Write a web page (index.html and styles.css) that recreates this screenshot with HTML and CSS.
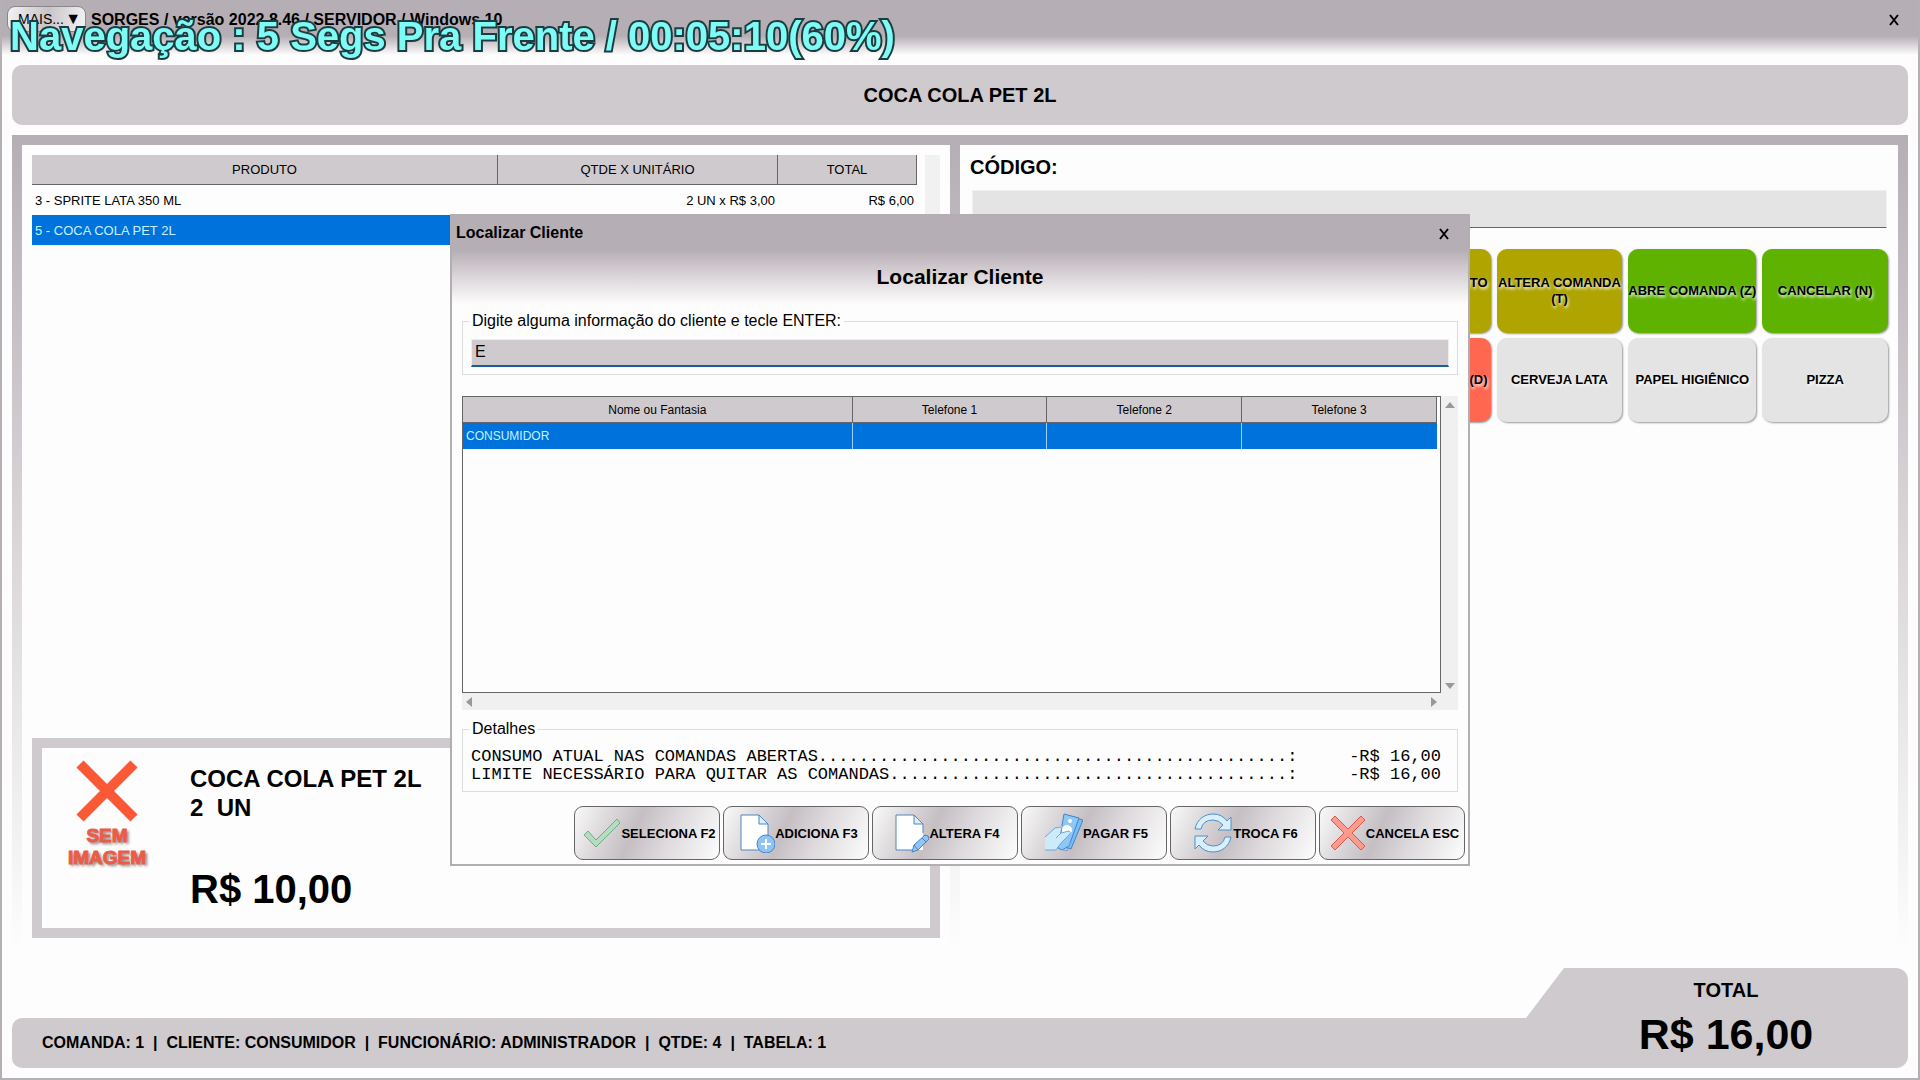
FILE: index.html
```html
<!DOCTYPE html>
<html lang="pt-BR">
<head>
    <meta charset="UTF-8">
    <meta name="viewport" content="width=device-width, initial-scale=1.0">
    <title>SORGES</title>
    <link rel="stylesheet" href="styles.css">
</head>
<body>
    <header class="titlebar">
        <button type="button" class="more">MAIS... <span class="arrow">▼</span></button>
        <span class="app-name">SORGES / versão 2022.8.46 / SERVIDOR / Windows 10</span>
        <button type="button" class="close" aria-label="Fechar"><svg width="12" height="12" viewBox="0 0 12 12"><path d="M2 1l8 10M10 1L2 11"/></svg></button>
    </header>

    <h1 class="banner">COCA COLA PET 2L</h1>

    <main class="content">
        <!-- Items of the current order -->
        <section class="panel order">
            <div class="order-list">
                <table class="items">
                    <thead>
                        <tr><th class="col-product">PRODUTO</th><th class="col-qty">QTDE X UNITÁRIO</th><th>TOTAL</th></tr>
                    </thead>
                    <tbody>
                        <tr><td>3 - SPRITE LATA 350 ML</td><td>2 UN x R$ 3,00</td><td>R$ 6,00</td></tr>
                        <tr class="selected"><td>5 - COCA COLA PET 2L</td><td>2 UN x R$ 5,00</td><td>R$ 10,00</td></tr>
                    </tbody>
                </table>
                <div class="track"></div>
            </div>
            <div class="product">
                <div class="no-image">
                    <svg width="62" height="62" viewBox="0 0 62 62"><path d="M4 4l54 54M58 4L4 58" stroke="#fb5836" stroke-width="10"/></svg>
                    <span>SEM<br>IMAGEM</span>
                </div>
                <div class="product-info">
                    <p class="product-name">COCA COLA PET 2L</p>
                    <p class="product-name">2&nbsp; UN</p>
                    <p class="price">R$ 10,00</p>
                </div>
            </div>
        </section>

        <!-- Code entry and shortcut keys -->
        <section class="panel entry">
            <label for="code">CÓDIGO:</label>
            <input type="text" id="code" class="code">
            <div class="keys">
                <button type="button" class="key olive key-first">ALTERA PRODUTO (P)</button>
                <button type="button" class="key olive">ALTERA COMANDA (T)</button>
                <button type="button" class="key green key-wide">ABRE COMANDA (Z)</button>
                <button type="button" class="key green">CANCELAR (N)</button>
                <button type="button" class="key red key-first">CANCELA ITEM (D)</button>
                <button type="button" class="key">CERVEJA LATA</button>
                <button type="button" class="key">PAPEL HIGIÊNICO</button>
                <button type="button" class="key">PIZZA</button>
            </div>
        </section>
    </main>

    <footer class="footer">
        <div class="status">COMANDA: 1&nbsp; |&nbsp; CLIENTE: CONSUMIDOR&nbsp; |&nbsp; FUNCIONÁRIO: ADMINISTRADOR&nbsp; |&nbsp; QTDE: 4&nbsp; |&nbsp; TABELA: 1</div>
        <svg class="slope" width="38" height="100" viewBox="0 0 38 100"><path d="M38 0L0 50v50h38z" fill="#cfcacd"/></svg>
        <div class="total">
            <span class="total-label">TOTAL</span>
            <strong class="total-value">R$ 16,00</strong>
        </div>
    </footer>

    <!-- Client search -->
    <div class="overlay">
        <div class="dialog" role="dialog" aria-labelledby="dialog-title">
            <div class="dialog-bar">
                <span>Localizar Cliente</span>
                <button type="button" class="close" aria-label="Fechar"><svg width="12" height="12" viewBox="0 0 12 12"><path d="M2 1l8 10M10 1L2 11"/></svg></button>
            </div>
            <h2 id="dialog-title">Localizar Cliente</h2>

            <div class="dialog-body">
                <fieldset class="search">
                    <legend><label for="search">Digite alguma informação do cliente e tecle ENTER:</label></legend>
                    <input type="text" id="search" value="E" autofocus onfocus="this.setSelectionRange(1, 1)">
                </fieldset>

                <div class="grid">
                    <div class="grid-view">
                        <table class="clients">
                            <thead>
                                <tr><th class="col-name">Nome ou Fantasia</th><th>Telefone 1</th><th>Telefone 2</th><th>Telefone 3</th></tr>
                            </thead>
                            <tbody>
                                <tr class="selected"><td>CONSUMIDOR</td><td></td><td></td><td></td></tr>
                            </tbody>
                        </table>
                    </div>
                    <div class="vbar">
                        <svg width="10" height="6" viewBox="0 0 10 6"><path d="M0 6l5-6 5 6z"/></svg>
                        <svg width="10" height="6" viewBox="0 0 10 6"><path d="M0 0l5 6 5-6z"/></svg>
                    </div>
                    <div class="hbar">
                        <svg width="6" height="10" viewBox="0 0 6 10"><path d="M6 0L0 5l6 5z"/></svg>
                        <svg width="6" height="10" viewBox="0 0 6 10"><path d="M0 0l6 5-6 5z"/></svg>
                    </div>
                </div>

                <fieldset class="details">
                    <legend>Detalhes</legend>
                    <div class="detail"><span>CONSUMO ATUAL NAS COMANDAS ABERTAS..............................................:</span><span>-R$ 16,00</span></div>
                    <div class="detail"><span>LIMITE NECESSÁRIO PARA QUITAR AS COMANDAS.......................................:</span><span>-R$ 16,00</span></div>
                </fieldset>
            </div>

            <div class="actions">
                <button type="button">
                    <svg width="38" height="38" viewBox="0 0 38 38"><path d="M1 21l4-4 8 9L34 5l3 4-24 24z" fill="#b3dcc0" stroke="#6fae85"/></svg>
                    SELECIONA F2
                </button>
                <button type="button">
                    <svg width="36" height="40" viewBox="0 0 36 40">
                        <path d="M2 2h18l9 9v26H2z" fill="#fff" stroke="#4e86c0"/><path d="M20 2v9h9z" fill="#d9effc" stroke="#4e86c0"/>
                        <circle cx="27" cy="31" r="9" fill="#90c4f2" stroke="#4184c8"/><path d="M27 26v10M22 31h10" stroke="#fff" stroke-width="2"/>
                    </svg>
                    ADICIONA F3
                </button>
                <button type="button">
                    <svg width="34" height="40" viewBox="0 0 34 40">
                        <path d="M1 2h18l9 9v26H1z" fill="#fff"/><path d="M28 20v-9l-9-9H1v35h16" fill="none" stroke="#4e86c0"/><path d="M19 2v9h9z" fill="#d9effc" stroke="#4e86c0"/>
                        <path d="M17 39l2-7 11-10q4 0 4 4L23 37z" fill="#90c4f2" stroke="#4184c8"/><path d="M19 32l4 5M27 25l4 4" stroke="#4184c8"/>
                    </svg>
                    ALTERA F4
                </button>
                <button type="button">
                    <svg width="38" height="40" viewBox="0 0 38 40">
                        <path d="M24 3l14 4-12 29-7-2z" fill="#7dbcf3" stroke="#4184c8"/>
                        <path d="M19 1l15 4-10 28-7 4-4-2 1-6z" fill="#8dc6f7" stroke="#4184c8"/>
                        <circle cx="25" cy="8" r="2" fill="#fff"/><circle cx="22" cy="17" r="5" fill="#fff"/>
                        <path d="M0 24l10-9 7-2-2 7 9-2q3 1 0 4l-8 8-5 7H0z" fill="#cdeafa"/>
                        <path d="M0 24l10-9 6-1M11 25l5-5 8-2q3 1 0 4l-8 8-5 7H0M18 37l4 1 4-9" fill="none" stroke="#6aa9dd"/>
                    </svg>
                    PAGAR F5
                </button>
                <button type="button">
                    <svg width="40" height="40" viewBox="0 0 40 40">
                        <path d="M2 16C4 6 12 1 20 1q9 0 14 7l4-4v13H25l5-5q-4-5-10-5-10 0-12 9z" fill="#d9effc" stroke="#4e90cc"/>
                        <path d="M38 24c-2 10-10 15-18 15q-9 0-14-7l-4 4V23h13l-5 5q4 5 10 5 10 0 12-9z" fill="#d9effc" stroke="#4e90cc"/>
                    </svg>
                    TROCA F6
                </button>
                <button type="button">
                    <svg width="36" height="36" viewBox="0 0 36 36"><path d="M5 1l13 13L31 1l4 4-13 13 13 13-4 4-13-13L5 35l-4-4 13-13L1 5z" fill="#fc9a8e" stroke="#d9584c"/></svg>
                    CANCELA ESC
                </button>
            </div>
        </div>
    </div>

    <div class="osd">Navegação : 5 Segs Pra Frente / 00:05:10(60%)</div>
</body>
</html>
```
FILE: styles.css
```css
* {
    box-sizing: border-box;
}
body {
    margin: 0;
    min-height: 100vh;
    display: flex;
    flex-direction: column;
    font-family: "Liberation Sans", Arial, sans-serif;
    color: #000;
    background-color: #fdfdfd;
    border: solid #b5b0b4;
    border-width: 0 2px 2px;
}
h1, h2, p {
    margin: 0;
}
button, input {
    font-family: inherit;
    color: inherit;
}
.titlebar {
    display: flex;
    align-items: flex-start;
    height: 55px;
    padding: 6px 18px 0 5px;
    background: linear-gradient(#b6aeb5 36px, #fdfdfd 55px);
}
.more {
    display: flex;
    justify-content: space-between;
    align-items: center;
    width: 79px;
    height: 26px;
    padding: 0 4px 0 10px;
    font-size: 14px;
    border: 1px solid #888;
    border-radius: 8px;
    background: linear-gradient(100deg, #f4f3f4, #c8c3c7 50%, #f4f3f4);
}
.arrow {
    font-size: 16px;
}
.app-name {
    flex: 1;
    margin-left: 5px;
    font-size: 16px;
    font-weight: bold;
    line-height: 28px;
}
.close {
    display: flex;
    margin-top: 8px;
    padding: 0;
    border: none;
    background: none;
}
.close path {
    stroke: #000;
    stroke-width: 2;
}
.banner {
    margin: 10px 10px 0;
    font-size: 20px;
    line-height: 60px;
    text-align: center;
    background-color: #cfcacd;
    border-radius: 10px;
}

/* Order and entry panels */
.content {
    flex: 1;
    display: grid;
    grid-template-columns: 928fr 938fr;
    gap: 10px;
    margin: 10px 10px 0;
    padding: 10px 10px 0;
    background: linear-gradient(#b6aeb5, #fdfdfd);
}
.panel {
    display: flex;
    flex-direction: column;
    padding: 10px;
    background-color: #fdfdfd;
}
.order {
    justify-content: space-between;
    padding-bottom: 12px;
}
.order-list {
    display: flex;
    flex: 1;
    gap: 8px;
    margin-bottom: 10px;
}
.items, .clients {
    width: 100%;
    table-layout: fixed;
    border-collapse: separate;
    border-spacing: 0;
    align-self: flex-start;
}
th {
    font-weight: normal;
    background-color: #cfcacd;
    border-right: 1px solid #666;
    border-bottom: 1px solid #666;
}
.items {
    flex: 1;
    font-size: 13px;
}
.items th, .items td {
    height: 30px;
    padding: 0 3px;
}
.items td + td {
    text-align: right;
}
.col-product {
    width: 466px;
}
.col-qty {
    width: 280px;
}
.selected td {
    color: #c5f2ff;
    background-color: #0072dc;
}
.track {
    width: 15px;
    background-color: #f1f1f1;
}
.product {
    display: flex;
    height: 200px;
    border: 10px solid #cfcacd;
}
.no-image {
    display: flex;
    flex-direction: column;
    align-items: center;
    width: 130px;
    padding-top: 12px;
    font-size: 19px;
    font-weight: 900;
    line-height: 22px;
    text-align: center;
    color: #ea5c4a;
    -webkit-text-stroke: 1px #ea5c4a;
    text-shadow: 2px 2px 3px #777;
}
.no-image span {
    margin-top: 3px;
}
.product-info {
    padding: 16px 0 0 18px;
    font-weight: bold;
}
.product-name {
    font-size: 24px;
    line-height: 29px;
}
.price {
    margin-top: 43px;
    font-size: 40px;
    line-height: 48px;
}
.entry label {
    font-size: 20px;
    font-weight: bold;
    line-height: 24px;
}
.code {
    height: 38px;
    margin: 11px 1px 21px 2px;
    border: 1px solid #f0f0f0;
    border-bottom: 1px solid #666;
    background-color: #e4e4e4;
    font-size: 20px;
}
.keys {
    display: grid;
    grid-template-columns: repeat(7, 1fr);
    gap: 5px 6px;
}
.key {
    height: 84px;
    padding: 0;
    font-size: 13px;
    font-weight: bold;
    line-height: 16px;
    border: none;
    border-radius: 10px;
    background-color: #e4e4e4;
    box-shadow: 1px 1px 2px #999;
    text-shadow: 1px 2px 3px #fff;
}
.key-first {
    grid-column: 4;
}
.key-wide {
    font-size: 13px;
    white-space: nowrap;
}
.olive {
    background-color: #b0a500;
}
.green {
    background-color: #5fb300;
}
.red {
    background-color: #ff6750;
}

/* Footer */
.footer {
    display: flex;
    align-items: flex-end;
    margin: 18px 10px 10px;
    font-weight: bold;
}
.status {
    flex: 1;
    height: 50px;
    padding-left: 30px;
    font-size: 16px;
    line-height: 50px;
    background-color: #cfcacd;
    border-radius: 10px 0 0 10px;
}
.slope {
    display: block;
}
.total {
    display: flex;
    flex-direction: column;
    align-items: center;
    width: 344px;
    height: 100px;
    padding: 10px 20px 0 0;
    background-color: #cfcacd;
    border-radius: 0 12px 12px 0;
}
.total-label {
    font-size: 20px;
    line-height: 24px;
}
.total-value {
    margin-top: 8px;
    font-size: 43px;
    line-height: 48px;
}

/* Client dialog */
.overlay {
    position: fixed;
    inset: 0;
    display: grid;
    place-items: center;
}
.dialog {
    width: 1020px;
    max-width: 100%;
    border: 2px solid #b3aeb2;
    background: linear-gradient(#b6aeb5 34px, #cdc6cb 50px, #fdfdfd 88px);
}
.dialog-bar {
    display: flex;
    justify-content: space-between;
    padding: 0 18px 0 4px;
    font-size: 16px;
    font-weight: bold;
    line-height: 34px;
}
.dialog-bar .close {
    margin-top: 12px;
}
.dialog h2 {
    font-size: 21px;
    line-height: 28px;
    margin-top: 13px;
    text-align: center;
}
.dialog-body {
    padding: 20px 10px 0;
}
fieldset {
    min-width: 0;
    margin: 0;
    padding: 0 8px;
    border: 1px solid #ddd;
}
legend {
    margin-left: -2px;
    padding: 0 3px;
    font-size: 16px;
    line-height: 20px;
}
.search input {
    display: block;
    width: 100%;
    height: 28px;
    margin: 8px 0 7px;
    padding: 0 3px 2px;
    font-size: 16px;
    border: 1px solid #eee;
    border-bottom: 2px solid #1d5c9c;
    background-color: #cfcacd;
    outline: none;
}
.grid {
    display: grid;
    grid-template-columns: 1fr 17px;
    margin-top: 21px;
}
.grid-view {
    height: 297px;
    padding-right: 3px;
    border: 1px solid #666;
}
.clients {
    font-size: 12px;
}
.clients th, .clients td {
    height: 26px;
    padding: 0 3px;
}
.clients td {
    border-right: 1px solid #9cd0fa;
}
.clients td:last-child {
    border-right: none;
}
.col-name {
    width: 40%;
}
.vbar, .hbar {
    display: flex;
    justify-content: space-between;
    align-items: center;
    background-color: #f0f0f0;
    fill: #999;
}
.vbar {
    flex-direction: column;
    padding: 6px 0 4px;
}
.hbar {
    grid-column: 1 / 3;
    height: 17px;
    padding: 0 21px 0 4px;
}
.details {
    margin-top: 9px;
    padding-bottom: 7px;
}
.detail {
    display: flex;
    justify-content: space-between;
    padding-right: 8px;
    font-family: "Liberation Mono", "Courier New", monospace;
    font-size: 17px;
    line-height: 18px;
}
.details legend + .detail {
    margin-top: 9px;
}
.actions {
    display: flex;
    justify-content: flex-end;
    gap: 3px;
    padding: 14px 3px 4px;
}
.actions button {
    display: flex;
    align-items: center;
    justify-content: center;
    width: 146px;
    height: 54px;
    padding: 0 0 0 5px;
    font-size: 13px;
    font-weight: bold;
    white-space: nowrap;
    border: 1px solid #666;
    border-radius: 9px;
    background: linear-gradient(115deg, #fafafa, #d8d4d7 25%, #c5bfc4 42%, #dedadd 65%, #fdfdfd);
}

/* Player message over the window */
.osd {
    position: fixed;
    top: 14px;
    left: 10px;
    font-size: 40px;
    font-weight: bold;
    line-height: 44px;
    white-space: nowrap;
    color: #7ffbf6;
    -webkit-text-stroke: 4px #1c3c40;
    paint-order: stroke fill;
}
```
